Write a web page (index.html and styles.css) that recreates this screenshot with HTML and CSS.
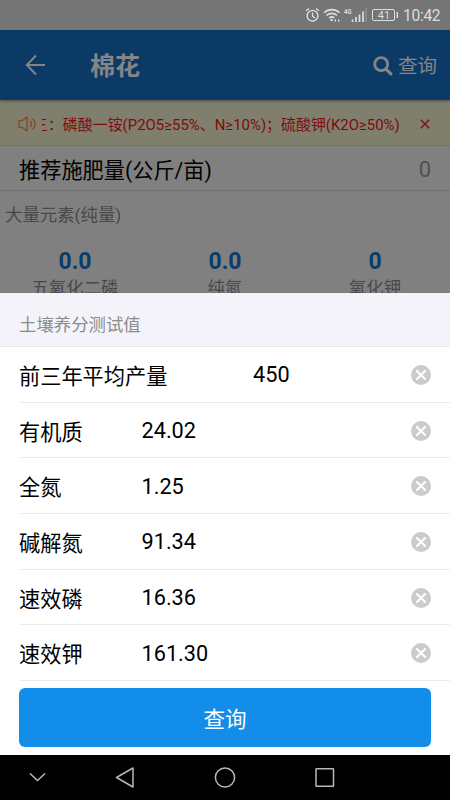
FILE: index.html
```html
<!DOCTYPE html>
<html lang="zh-CN">
<head>
<meta charset="utf-8">
<title>棉花</title>
<link rel="stylesheet" href="styles.css">
</head>
<body>
<svg class="defs" width="0" height="0">
  <symbol id="clear" viewBox="0 0 20 20"><circle cx="10" cy="10" r="10" fill="#cbcbcb"/><path d="M6 6l8 8M14 6l-8 8" stroke="#fff" stroke-width="2.2" stroke-linecap="round"/></symbol>
</svg>
<div class="statusbar">
  <svg class="status-icons" width="94" height="20" viewBox="0 0 94 20" fill="none" stroke="#dedede">
    <circle cx="7.5" cy="10.8" r="5.4" stroke-width="1.4"/>
    <path d="M7.5 7.5v3.6l2.4 2M1 5.8l3-2.4M14 5.8l-3-2.4" stroke-width="1.3"/>
    <path d="M19 7.8c4.3-4.3 11.200-4.300 15.500 0M21.500 10.500c3-2.900 7.600-2.900 10.500 0M24.200 13c1.500-1.400 3.600-1.400 5 0" stroke-width="1.6"/>
    <circle cx="26.500" cy="15" r="1.200" fill="#dedede" stroke="none"/>
    <path d="M29 15.500l2-1.500v3zM35 15.500l-2-1.500v3z" fill="#dedede" stroke="none"/>
    <path d="M47.500 17v-2.500M51 17v-5M54.500 17v-7.500M58 17V6.500" stroke-width="1.700"/>
    <path d="M61 17V3" stroke="#929292" stroke-width="1.400"/>
    <rect x="67.500" y="4.500" width="22" height="11" rx="1.500" stroke-width="1"/>
    <path d="M92.300 7v6" stroke-width="1.500"/>
    <text class="network" x="39" y="8.500" textLength="7.500" lengthAdjust="spacingAndGlyphs">4G</text>
    <text class="battery" x="72.800" y="13.900">41</text>
  </svg>
  <span class="clock">10:42</span>
</div>
<main class="backdrop">
  <header class="appbar">
    <svg class="back" width="22" height="22" viewBox="0 0 22 22" fill="none" stroke="#858585" stroke-width="2"><path d="M11 1.500L1.800 11l9.200 9.500M2 11h18"/></svg>
    <h1>棉花</h1>
    <svg class="search" width="20" height="20" viewBox="0 0 20 20" fill="none" stroke="#858585"><circle cx="8.200" cy="8.200" r="6.500" stroke-width="2.800"/><path d="M12.800 12.800l5 5" stroke-width="3.200" stroke-linecap="round"/></svg>
    <span class="action">查询</span>
  </header>
  <div class="notice">
    <svg width="19" height="16" viewBox="0 0 19 16" fill="none" stroke="#81461d" stroke-width="1.200"><path d="M1 4.500h3.200L9 1v14l-4.800-3.500H1zM12 5c1.600 1.700 1.600 4.300 0 6M14.500 2.500c3.500 3 3.500 8 0 11"/></svg>
    <div class="marquee"><span>三：磷酸一铵(P2O5≥55%、N≥10%)；硫酸钾(K2O≥50%)</span></div>
    <svg class="dismiss" width="10" height="10" viewBox="0 0 10 10" stroke="#7d1114" stroke-width="1.500"><path d="M.8.800l8.400 8.400M9.200.800L.800 9.200"/></svg>
  </div>
  <div class="total"><span>推荐施肥量(公斤/亩)</span><span class="amount">0</span></div>
  <h2>大量元素(纯量)</h2>
  <div class="elements">
    <div><b>0.0</b><span>五氧化二磷</span></div>
    <div><b>0.0</b><span>纯氮</span></div>
    <div><b>0</b><span>氧化钾</span></div>
  </div>
</main>
<section class="sheet">
  <h3>土壤养分测试值</h3>
  <div class="fields">
    <div class="field wide"><label>前三年平均产量</label><span>450</span><svg width="20" height="20"><use href="#clear"/></svg></div>
    <div class="field"><label>有机质</label><span>24.02</span><svg width="20" height="20"><use href="#clear"/></svg></div>
    <div class="field"><label>全氮</label><span>1.25</span><svg width="20" height="20"><use href="#clear"/></svg></div>
    <div class="field"><label>碱解氮</label><span>91.34</span><svg width="20" height="20"><use href="#clear"/></svg></div>
    <div class="field"><label>速效磷</label><span>16.36</span><svg width="20" height="20"><use href="#clear"/></svg></div>
    <div class="field"><label>速效钾</label><span>161.30</span><svg width="20" height="20"><use href="#clear"/></svg></div>
  </div>
  <button>查询</button>
</section>
<nav class="navbar">
  <svg width="450" height="45" viewBox="0 0 450 45" fill="none" stroke="#b8b8b8" stroke-width="1.500"><path d="M30 18.500l7.500 7 7.500-7"/><path d="M116.500 22.500l16.500-9.500v19z" stroke-linejoin="round"/><circle cx="225" cy="22.500" r="9.600"/><rect x="316" y="13.800" width="17.500" height="17.500" rx=".5"/></svg>
</nav>
</body>
</html>
```
FILE: styles.css
```css
* { box-sizing: border-box; }
body {
  margin: 0;
  width: 450px;
  height: 800px;
  overflow: hidden;
  display: flex;
  flex-direction: column;
  font-family: Roboto, "Noto Sans CJK SC", sans-serif;
  background: #fff;
  color: #000;
}
h1, h2, h3 { margin: 0; font-weight: 400; }
svg { display: block; flex: none; }
.defs { position: absolute; }
.statusbar {
  height: 30px;
  flex: none;
  display: flex;
  align-items: center;
  justify-content: flex-end;
  gap: 4px;
  padding-right: 10px;
  background: #757575;
  color: #dedede;
}
.clock { padding-top: 1px; font-size: 15.6px; line-height: 30px; width: 37px; white-space: nowrap; letter-spacing: -.3px; }
.status-icons text { fill: #dedede; stroke: none; }
.network { font-size: 8px; font-weight: 700; }
.battery { font-size: 11px; }
.backdrop { height: 263px; flex: none; overflow: hidden; background: #808080; }
.appbar {
  position: relative;
  height: 70px;
  display: flex;
  align-items: center;
  padding: 0 13px 0 25px;
  background: #0c3a66;
  color: #858585;
  box-shadow: 0 1px 3px rgba(0, 0, 0, .4);
}
.appbar h1 { margin-left: 43px; padding-top: 4px; font-size: 25px; font-weight: 700; line-height: 66px; }
.search { margin: 2px 5px 0 auto; }
.action { padding-top: 4px; font-size: 19.5px; line-height: 66px; }
.notice {
  height: 46px;
  display: flex;
  align-items: center;
  padding: 2px 20px 0 18px;
  background: #807e6c;
  border-bottom: 1px solid #707070;
  color: #800b10;
}
.marquee {
  width: 361px;
  margin-left: 5px;
  padding-top: 2px;
  overflow: hidden;
  font-size: 14.95px;
  line-height: 24px;
  white-space: nowrap;
}
.marquee span { display: block; margin-left: -9px; }
.dismiss { margin-left: auto; }
.total {
  height: 45px;
  display: flex;
  align-items: center;
  justify-content: space-between;
  padding: 0 19px;
  border-bottom: 1px solid #707070;
  font-size: 21.2px;
}
.amount { padding-top: 2px; color: #505050; font-size: 22px; }
h2 { padding: 10px 5px 0; font-size: 17.4px; line-height: 28px; color: #484848; }
.elements { display: grid; grid-template-columns: repeat(3, 1fr); padding-top: 21px; text-align: center; }
.elements b { display: block; font-size: 23px; line-height: 24px; color: #0c3c69; }
.elements span { display: block; font-size: 17.400px; line-height: 28px; color: #484848; }
.sheet { height: 462px; flex: none; background: #fff; }
h3 {
  height: 54px;
  padding: 6px 19px 0;
  border-bottom: 1px solid #e6e6e8;
  background: #f4f3f9;
  color: #8c8c8c;
  font-size: 17.400px;
  line-height: 52px;
}
.fields { margin-left: 19px; }
.field {
  height: 55.700px;
  display: flex;
  align-items: center;
  padding-right: 19px;
  border-bottom: 1px solid #ececec;
}
.field label { width: 122.5px; font-size: 21.200px; }
.wide label { width: 234px; }
.field span { padding-top: 1px; font-size: 21.700px; }
.field svg { margin: 1px 0 0 auto; }
button {
  display: block;
  width: 412px;
  height: 59px;
  margin: 7px 19px 0;
  padding: 4px 0 0;
  border: 0;
  border-radius: 6px;
  background: #128dea;
  color: #fff;
  font: 400 21.500px/55px Roboto, "Noto Sans CJK SC", sans-serif;
}
.navbar { height: 45px; flex: none; background: #000; }
```
